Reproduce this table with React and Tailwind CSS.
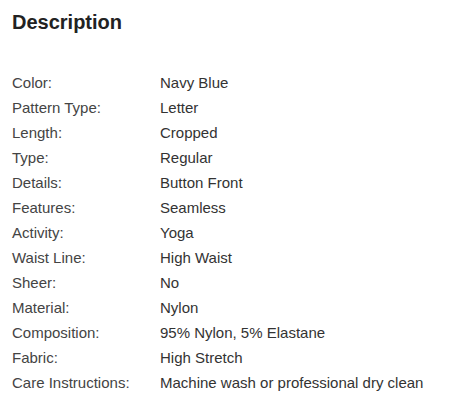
import React from 'react';

const ROWS = [
  ['Color:', 'Navy Blue'],
  ['Pattern Type:', 'Letter'],
  ['Length:', 'Cropped'],
  ['Type:', 'Regular'],
  ['Details:', 'Button Front'],
  ['Features:', 'Seamless'],
  ['Activity:', 'Yoga'],
  ['Waist Line:', 'High Waist'],
  ['Sheer:', 'No'],
  ['Material:', 'Nylon'],
  ['Composition:', '95% Nylon, 5% Elastane'],
  ['Fabric:', 'High Stretch'],
  ['Care Instructions:', 'Machine wash or professional dry clean'],
];

export default function App() {
  return (
    <div className="h-[406px] w-[450px] bg-white px-3 pt-[10px] font-['Liberation_Sans',Arial,sans-serif]">
      <h2 className="text-[20px] font-bold leading-6 text-[#222]">Description</h2>
      <div className="mt-[37px] flex flex-col">
        {ROWS.map(([label, value]) => (
          <div key={label} className="flex h-[25px] items-center text-[15px] text-[#333]">
            <span className="w-[148px] shrink-0 text-[#444]">{label}</span>
            <span>{value}</span>
          </div>
        ))}
      </div>
    </div>
  );
}
